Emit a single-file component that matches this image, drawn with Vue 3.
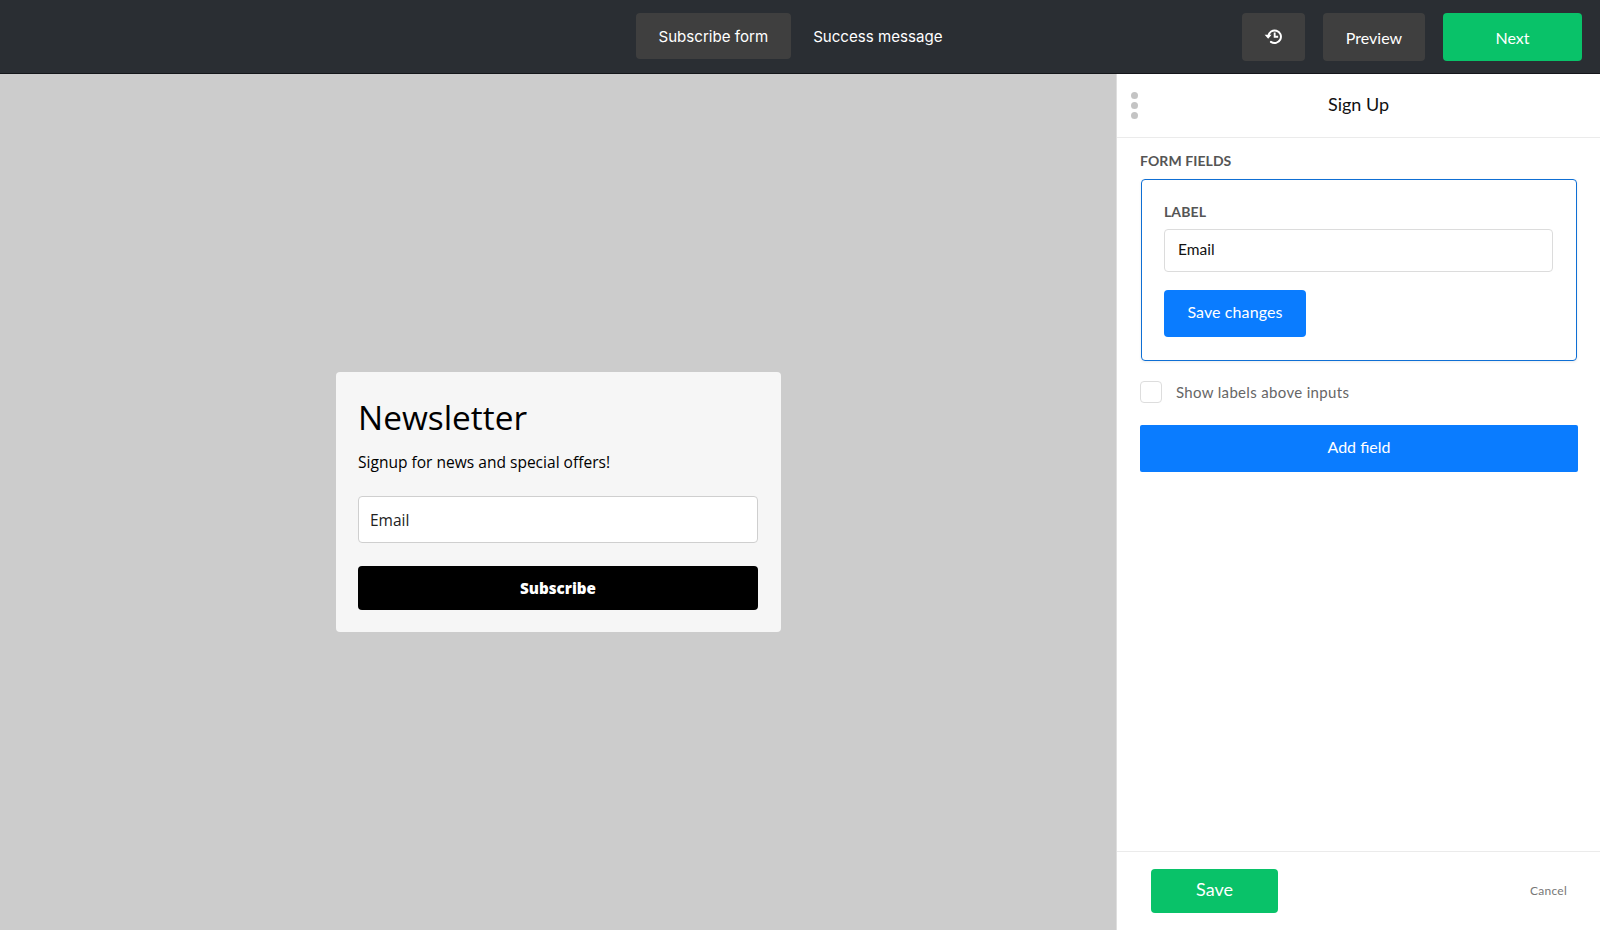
<script setup>
const tabs = [
  { label: 'Subscribe form', active: true },
  { label: 'Success message', active: false }
]
</script>

<template>
  <div class="page">
    <header class="topbar">
      <nav class="tabs">
        <button v-for="tab in tabs" :key="tab.label" class="tab" :class="{ active: tab.active }">{{ tab.label }}</button>
      </nav>
      <div class="actions">
        <button class="dark-btn history" aria-label="History">
          <svg width="21" height="21" viewBox="0 0 18 18" fill="none">
            <path d="M4.6 8.6a5.4 5.4 0 1 1 2.2 5" stroke="#fff" stroke-width="1.7" stroke-linecap="round" />
            <path d="M1.4 7.4h6l-3 3.6z" fill="#fff" />
            <path d="M10 5.6v3.6h3" stroke="#fff" stroke-width="1.6" />
          </svg>
        </button>
        <button class="dark-btn preview">Preview</button>
        <button class="next">Next</button>
      </div>
    </header>
    <div class="body">
      <main class="canvas">
        <section class="card">
          <h1>Newsletter</h1>
          <p>Signup for news and special offers!</p>
          <div class="card-input">Email</div>
          <button class="subscribe">Subscribe</button>
        </section>
      </main>
      <aside class="panel">
        <div class="panel-head">
          <div class="dots"><i></i><i></i><i></i></div>
          <h2>Sign Up</h2>
        </div>
        <div class="panel-main">
          <div class="section-title">FORM FIELDS</div>
          <div class="field-box">
            <div class="label">LABEL</div>
            <div class="text-input">Email</div>
            <button class="save-changes">Save changes</button>
          </div>
          <label class="check-row">
            <span class="checkbox"></span>
            <span class="check-text">Show labels above inputs</span>
          </label>
          <button class="add-field">Add field</button>
        </div>
        <footer class="panel-foot">
          <button class="save">Save</button>
          <span class="cancel">Cancel</span>
        </footer>
      </aside>
    </div>
  </div>
</template>

<style>
html, body { margin: 0; }
</style>

<style scoped>
* { box-sizing: border-box; }
button { border: 0; font: inherit; padding: 0; }
.page { width: 1600px; height: 930px; display: flex; flex-direction: column; overflow: hidden; font-family: Lato, "Open Sans", sans-serif; }

.topbar { height: 74px; flex: none; background: #2a2e33; border-bottom: 1px solid #14161a; position: relative; display: flex; justify-content: flex-end; }
.tabs { position: absolute; left: 636px; top: 13px; display: flex; gap: 0; }
.tab { height: 46px; padding: 0 22.5px; border-radius: 4px; background: transparent; color: #fff; font-family: Inter, sans-serif; font-size: 15.1px; }
.tab.active { background: #3f3f3f; }
.actions { display: flex; align-items: flex-start; padding: 13px 18px 0 0; }
.dark-btn { height: 48px; background: #3f3f3f; border-radius: 4px; color: #fff; font-size: 16px; display: flex; align-items: center; justify-content: center; }
.history { width: 63px; margin-right: 18px; padding-bottom: 1px; }
.preview { width: 102px; margin-right: 18px; }
.next { width: 139px; height: 48px; background: #09c269; color: #fff; border-radius: 4px; font-size: 16px; }

.body { flex: 1; display: flex; min-height: 0; }
.canvas { flex: 1; background: #cccccc; display: flex; align-items: center; justify-content: center; }
.card { width: 445px; height: 260px; background: #f6f6f6; border-radius: 4px; padding: 22px 23px 22px 22px; font-family: "Open Sans", sans-serif; color: #000; }
.card h1 { margin: 0; font-size: 33.4px; font-weight: 400; line-height: 46px; }
.card p { margin: 11px 0 0; font-size: 15.55px; line-height: 22px; }
.card-input { margin-top: 23px; height: 47px; background: #fff; border: 1px solid #cfcfcf; border-radius: 4px; padding: 0 11px; display: flex; align-items: center; font-size: 15.5px; color: #222; }
.subscribe { display: block; width: 100%; margin-top: 23px; height: 44px; background: #000; color: #fff; border-radius: 4px; font-weight: 800; font-size: 15.2px; }

.panel { width: 483px; flex: none; background: #fff; display: flex; flex-direction: column; box-shadow: -1px 0 0 #dedede; }
.panel-head { height: 64px; flex: none; border-bottom: 1px solid #ebebeb; position: relative; display: flex; align-items: center; justify-content: center; }
.panel-head h2 { margin: 0 0 4px; font-size: 18px; font-weight: 400; color: #111; }
.dots { position: absolute; left: 14px; top: 18px; display: flex; flex-direction: column; gap: 3px; }
.dots i { width: 7px; height: 7px; border-radius: 50%; background: #c4c4c4; }
.panel-main { flex: 1; padding: 14px 22px 0 23px; }
.section-title { font-size: 14px; font-weight: 700; color: #555; line-height: 18px; letter-spacing: .08px; }
.field-box { width: 436px; height: 182px; margin: 9px 0 0 1px; border: 1px solid #0f6fd4; border-radius: 4px; padding: 23px 22px; box-shadow: 0 1px 3px rgba(0,0,0,.08); }
.label { font-size: 14px; font-weight: 700; color: #555; line-height: 18px; letter-spacing: .1px; }
.text-input { margin-top: 8px; width: 389px; height: 43px; border: 1px solid #dcdcdc; border-radius: 4px; padding: 0 13px 4px; display: flex; align-items: center; font-size: 15.5px; color: #111; }
.save-changes { display: block; margin-top: 18px; width: 142px; height: 47px; padding-bottom: 4px; background: #0a7cff; color: #fff; border-radius: 4px; font-size: 16px; letter-spacing: .1px; }
.check-row { display: flex; align-items: center; gap: 14px; margin-top: 20px; font-size: 15px; color: #666; }
.check-text { letter-spacing: .33px; }
.checkbox { width: 22px; height: 22px; border: 1px solid #ddd; border-radius: 4px; }
.add-field { display: block; margin-top: 22px; width: 438px; height: 47px; padding-bottom: 4px; background: #0a7cff; color: #fff; border-radius: 2px; font-size: 16px; }
.panel-foot { height: 79px; flex: none; border-top: 1px solid #ebebeb; padding: 17px 33px 0 34px; display: flex; justify-content: space-between; align-items: flex-start; }
.save { width: 127px; height: 44px; padding-bottom: 4px; background: #09c269; color: #fff; border-radius: 4px; font-size: 18px; }
.cancel { font-size: 12px; letter-spacing: .25px; color: #777; margin-top: 14px; }
</style>
